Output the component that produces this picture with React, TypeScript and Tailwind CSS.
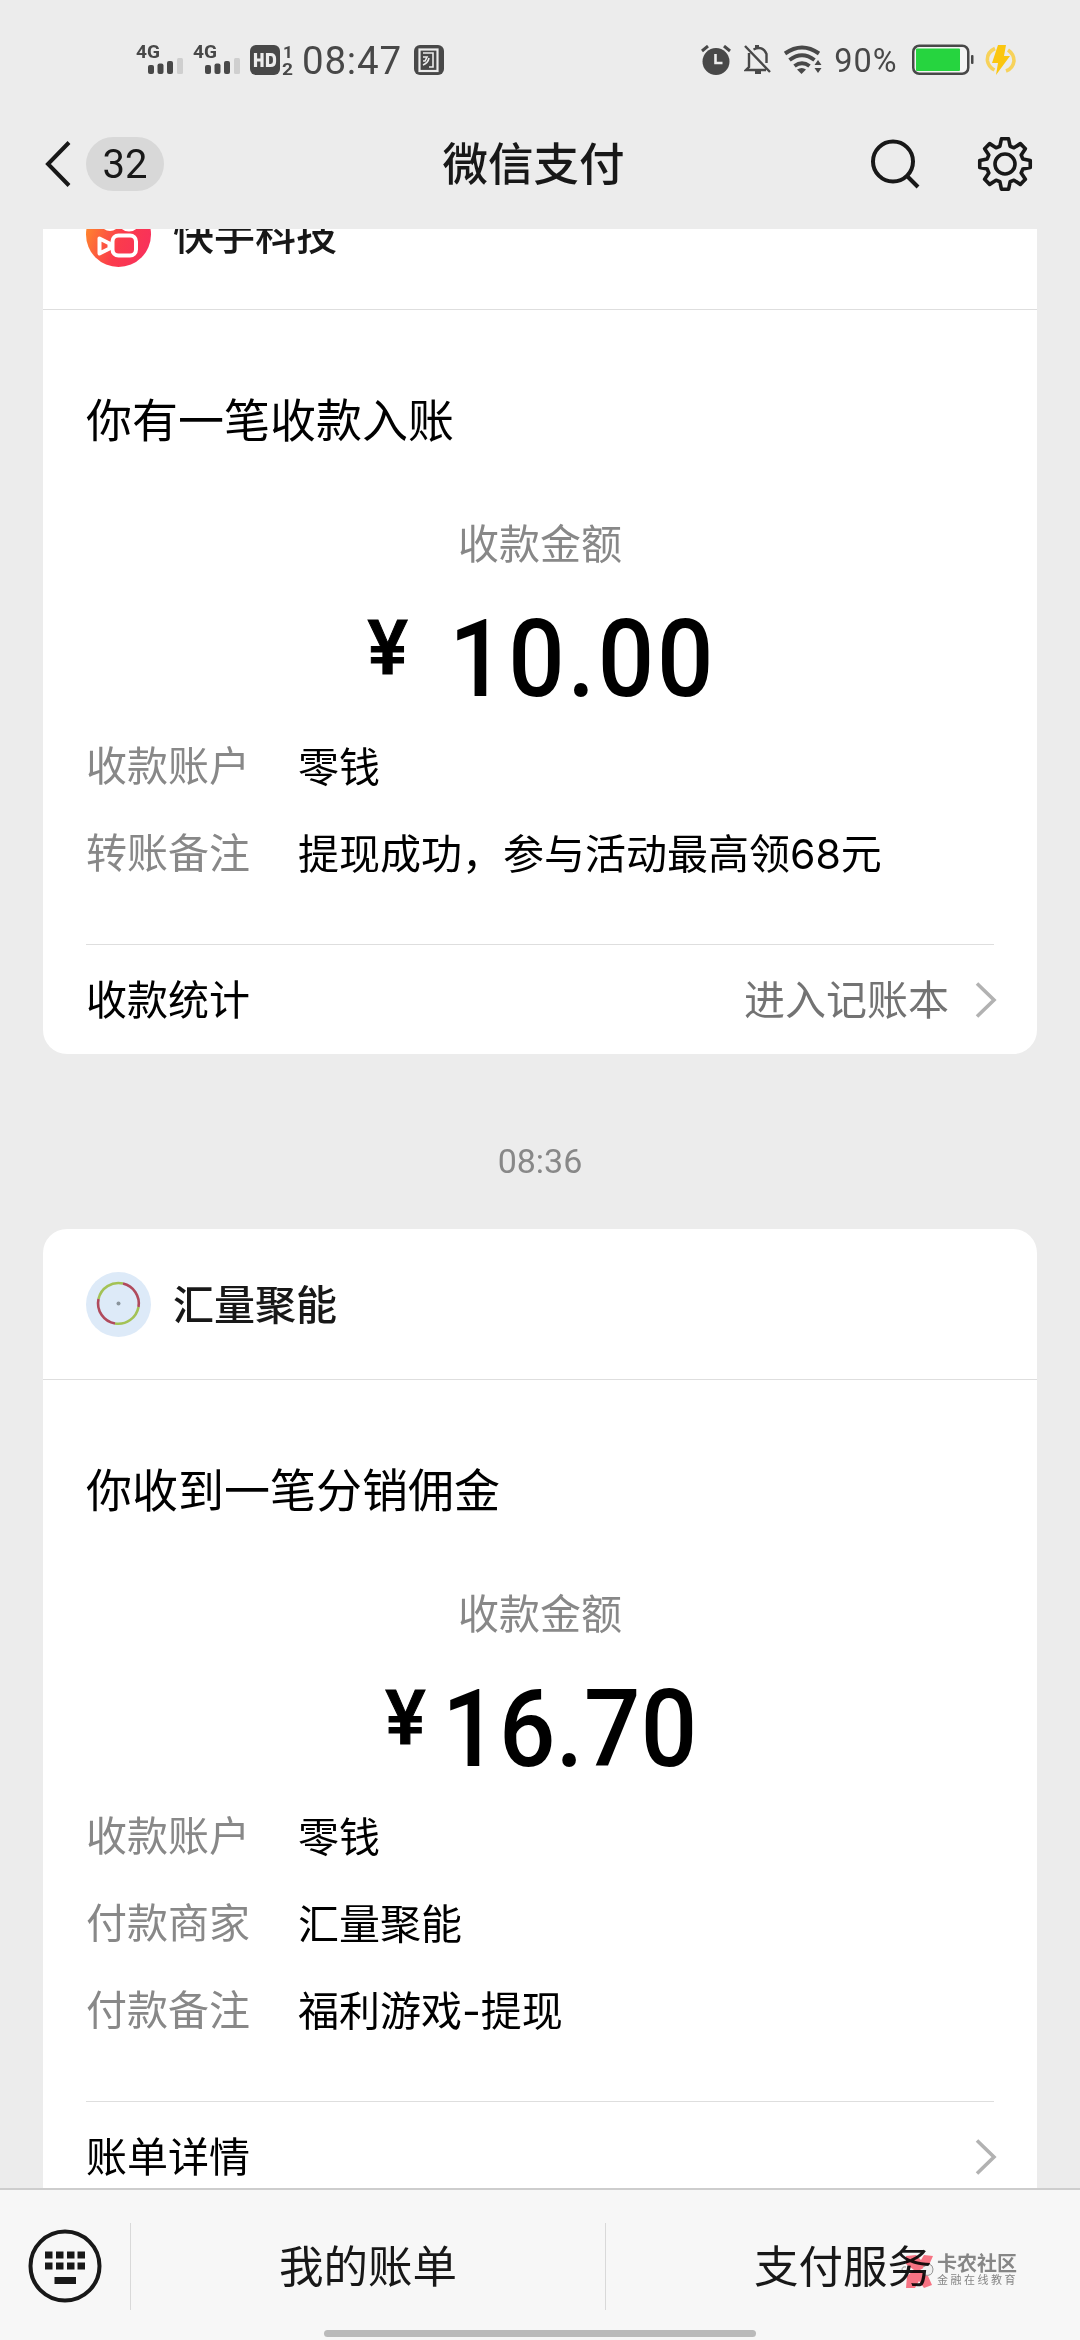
import React from "react";

const SANS = "font-['Roboto','Noto_Sans_CJK_SC',sans-serif]";

function Signal() {
  return (
    <svg width="48" height="34" viewBox="0 0 48 34" className="shrink-0 overflow-visible">
      <text x="0" y="15" fontSize="19" fontWeight="700" fill="#484848" fontFamily="Roboto, sans-serif" textLength="24" lengthAdjust="spacingAndGlyphs">4G</text>
      <rect x="12" y="22" width="6" height="9" rx="2" fill="#484848" />
      <rect x="21.500" y="20.500" width="6" height="10.500" rx="2" fill="#484848" />
      <rect x="31" y="18" width="6" height="13" rx="2" fill="#484848" />
      <rect x="41" y="15" width="6" height="16" rx="1.500" fill="#cfcfcf" />
    </svg>
  );
}

function StatusBar() {
  return (
    <div className="flex h-[120px] items-center pl-[136px] pr-[64px] text-[#484848]">
      <div className="flex h-[34px] w-[166px] items-center">
        <div className="w-[57px]"><Signal /></div>
        <div className="w-[57px]"><Signal /></div>
        <svg width="44" height="34" viewBox="0 0 44 34" className="shrink-0 overflow-visible">
          <rect x="0" y="2" width="30" height="30" rx="6" fill="#484848" />
          <path d="M5.500 10v14M12 10v14M5.500 17h6.500M17.500 11.500v11h3q4 0 4-4v-3q0-4-4-4z" fill="none" stroke="#ececec" strokeWidth="3.200" />
          <text x="33" y="14.500" fontSize="17" fontWeight="700" fill="#484848" fontFamily="Roboto, sans-serif">1</text>
          <text x="32" y="31.500" fontSize="17" fontWeight="700" fill="#484848" fontFamily="Roboto, sans-serif" textLength="11" lengthAdjust="spacingAndGlyphs">2</text>
        </svg>
      </div>
      <div className="w-[112px] whitespace-nowrap pt-[2px] text-[38.500px] leading-[40px] tracking-[0.8px]">08:47</div>
      <svg width="30" height="30" viewBox="0 0 30 30" className="shrink-0">
        <rect width="30" height="30" rx="6" fill="#484848" />
        <rect x="5.500" y="4.500" width="18" height="21.500" fill="none" stroke="#ececec" strokeWidth="2.200" />
        <path d="M9 8h10v14h-4M9 12h4l-2 4h-2M9 20q5-2 6-7" fill="none" stroke="#ececec" strokeWidth="1.600" />
      </svg>
      <div className="ml-auto flex items-center">
        <svg width="30" height="30" viewBox="0 0 30 30" className="shrink-0">
          <circle cx="15" cy="16.500" r="13.500" fill="#484848" />
          <path d="M1 6l6-5M29 6l-6-5" stroke="#484848" strokeWidth="3" />
          <path d="M14.500 9v9h7" fill="none" stroke="#ececec" strokeWidth="2.600" />
        </svg>
        <svg width="28" height="30" viewBox="0 0 28 30" className="ml-[13px] shrink-0" fill="none" stroke="#484848" strokeWidth="2.400">
          <path d="M1 1l25 26M5 8v14l-3 3h20M9.500 4.500q9-4.500 13 4.500v9" />
          <path d="M11 1.500h4M11 27.500h6" strokeWidth="3" />
        </svg>
        <svg width="40" height="30" viewBox="0 0 40 30" className="ml-[11px] shrink-0">
          <g fill="none" stroke="#484848" strokeWidth="4">
            <path d="M2 8.500q17-12 34 0" />
            <path d="M6.500 15q12.500-9.500 25 0" />
            <path d="M11.500 21q7.500-5.500 15 0" />
          </g>
          <path d="M14 24.500q5-3 9 0l-4.500 4.500z" fill="#484848" />
          <path d="M31.500 20l3.500-5 3.500 5zM31.500 23l3.500 5 3.500-5z" fill="#484848" />
        </svg>
        <div className="ml-[9px] w-[68px] whitespace-nowrap pt-[2px] text-center text-[32.500px] leading-[40px] tracking-[1px]">90%</div>
        <svg width="62" height="32" viewBox="0 0 62 32" className="ml-[12px] shrink-0">
          <rect x="1.250" y="1.750" width="55" height="28" rx="6" fill="#f4f4f4" stroke="#484848" strokeWidth="2.500" />
          <rect x="4" y="4.500" width="44" height="22.500" rx="1" fill="#26d43f" />
          <rect x="59" y="11" width="2.500" height="9" rx="1" fill="#484848" />
        </svg>
        <svg width="31" height="32" viewBox="0 0 31 32" className="ml-[11px] shrink-0">
          <path d="M10 4.500q-8.500 4-7.500 12.500q1 6 7 9M23 6q6 4 6 11q-1 7.500-8 10" fill="none" stroke="#f7d25a" strokeWidth="3.600" />
          <path d="M13 1l8 0-2 11h6L11 31l2-12H7z" fill="#fbc60f" />
        </svg>
      </div>
    </div>
  );
}

function gearPath() {
  const pts: string[] = [];
  for (let i = 0; i < 8; i++) {
    const base = (i * Math.PI) / 4 - Math.PI / 2;
    const add = (r: number, off: number) =>
      pts.push(`${(28 + r * Math.cos(base + off)).toFixed(2)} ${(28 + r * Math.sin(base + off)).toFixed(2)}`);
    add(18.5, -0.28);
    add(25.5, -0.14);
    add(25.5, 0.14);
    add(18.5, 0.28);
  }
  return "M" + pts.join("L") + "Z";
}

function NavBar() {
  return (
    <div className="flex h-[88px] items-center pl-[44px] pr-[47px] text-[#181818]">
      <svg width="28" height="50" viewBox="0 0 28 50" fill="none" stroke="#181818" strokeWidth="4" className="shrink-0">
        <path d="M25 3.500L4 25l21 21.500" />
      </svg>
      <div className="ml-[14px] flex h-[54px] w-[78px] items-center justify-center rounded-full bg-[#d8d8d8] pt-[2px] text-[40px] leading-none">32</div>
      <div className="flex-1 pl-[34px] pt-[4px] text-center text-[45.500px] font-medium leading-[54px]">微信支付</div>
      <svg width="52" height="52" viewBox="0 0 52 52" fill="none" stroke="#181818" strokeWidth="4" className="shrink-0">
        <circle cx="24" cy="23.500" r="20" />
        <path d="M38 38l11 11" />
      </svg>
      <svg width="56" height="56" viewBox="0 0 56 56" fill="none" stroke="#181818" strokeWidth="3.600" strokeLinejoin="round" className="ml-[56px] shrink-0">
        <path d={gearPath()} />
        <circle cx="28" cy="28" r="10" />
      </svg>
    </div>
  );
}

function KuaishouLogo() {
  return (
    <svg width="65" height="65" viewBox="0 0 65 65" className="shrink-0">
      <defs>
        <linearGradient id="ks" x1="0" y1="0.300" x2="1" y2="0.700">
          <stop offset="0" stopColor="#ff8a2b" />
          <stop offset="0.550" stopColor="#fb3b4c" />
          <stop offset="1" stopColor="#f8305c" />
        </linearGradient>
      </defs>
      <circle cx="32.500" cy="32.500" r="32.500" fill="url(#ks)" />
      <g fill="none" stroke="#fff" strokeWidth="4">
        <circle cx="24" cy="19" r="8" />
        <circle cx="43" cy="18" r="9.500" />
        <rect x="26.500" y="33.500" width="23.500" height="20" rx="6" />
        <path d="M13.500 36.500v15l10-5v-5z" strokeLinejoin="round" />
      </g>
    </svg>
  );
}

function RingLogo() {
  return (
    <svg width="65" height="65" viewBox="0 0 65 65" className="shrink-0">
      <circle cx="32.500" cy="32.500" r="32.500" fill="#ddeaf8" />
      <g fill="none" strokeWidth="2.600">
        <path d="M12.500 27A20.500 20.500 0 0 1 37 11.500" stroke="#a3c255" />
        <path d="M37 11.500A20.500 20.500 0 0 1 52.500 35" stroke="#b04a5c" />
        <path d="M52.500 35A20.500 20.500 0 0 1 29 51.500" stroke="#a3c255" />
        <path d="M29 51.500A20.500 20.500 0 0 1 12.500 27" stroke="#b04a5c" />
      </g>
      <circle cx="32.500" cy="31.500" r="2" fill="#8a949c" />
    </svg>
  );
}

function Chevron() {
  return (
    <svg width="22" height="38" viewBox="0 0 22 38" fill="none" stroke="#b2b2b2" strokeWidth="3.600" className="-mr-[3px] shrink-0">
      <path d="M2 2.500L19 19 2 35.500" />
    </svg>
  );
}

interface CardProps {
  logo: React.ReactNode;
  name: string;
  title: string;
  amount: string;
  amountSpacing: string;
  rows: [string, string][];
  footer: string;
  footerLink?: string;
}

const AMOUNT_LABEL = "收款金额";

function PayCard({ logo, name, title, amount, amountSpacing, rows, footer, footerLink }: CardProps) {
  return (
    <section className="mx-[43px] shrink-0 rounded-[24px] bg-white text-black">
      <header className="flex h-[151px] items-center border-b border-[#dedede] pl-[43px]">
        {logo}
        <span className="ml-[22px] pt-[3px] text-[41px] font-medium leading-[48px] text-[#181818]">{name}</span>
      </header>
      <div className="px-[43px]">
        <h2 className="pt-[83px] text-[46px] leading-[56px]">{title}</h2>
        <p className="mt-[72px] text-center text-[41px] leading-[48px] text-[#888]">{AMOUNT_LABEL}</p>
        <div className="mt-[34px] flex h-[110px] items-start justify-center font-medium">
          <span className="text-[76px] leading-[90px] [-webkit-text-stroke:1px_black]">¥</span>
          <span className={`origin-left scale-x-[0.92] text-[108px] leading-[112px] ${amountSpacing}`}>{amount}</span>
        </div>
        <dl className="mt-[10px]">
          {rows.map(([k, v]) => (
            <div key={k} className="flex h-[87px] items-center text-[41px] leading-[48px]">
              <dt className="w-[212px] text-[#888]">{k}</dt>
              <dd className="font-['Inter','Noto_Sans_CJK_SC',sans-serif]">{v}</dd>
            </div>
          ))}
        </dl>
        <div className="mt-[47px] flex h-[110px] items-center border-t border-[#dedede] text-[41px] leading-[48px]">
          <span className="flex-1 pt-[3px]">{footer}</span>
          {footerLink && <span className="mr-[26px] pt-[3px] text-[#737373]">{footerLink}</span>}
          <Chevron />
        </div>
      </div>
    </section>
  );
}

function Watermark() {
  return (
    <div className="absolute left-[901px] top-[62px] flex items-center mix-blend-multiply">
      <svg width="33" height="38" viewBox="0 0 33 38" className="shrink-0">
        <path d="M5 4l10-1 5 5 3-5 9 1-4 9-9 5 8 6 4 9-8 3-5-7-4 7H5l1-12 7-6-8-6z" fill="#ff5f72" opacity="0.85" />
        <path d="M22 15q9-6 10 2 0 8-9 6M1 18q0-4 4-3M1 18q2 4 6 2" fill="#f7f7f7" stroke="#9a9a9a" strokeWidth="1" />
      </svg>
      <div className="ml-[3px] text-[#8a8a8a]">
        <div className="text-[20px] font-bold leading-[20px]">卡农社区</div>
        <div className="text-[11px] leading-[14px] tracking-[2.500px]">金融在线教育</div>
      </div>
    </div>
  );
}

function BottomBar() {
  return (
    <footer className="relative flex h-[152px] shrink-0 flex-col border-t-2 border-[#cdcdcd] bg-[#f7f7f7] text-[#181818]">
      <div className="flex flex-1 items-center pt-[12px] text-[44.500px] leading-[54px]">
        <div className="flex w-[130px] justify-center">
          <svg width="74" height="74" viewBox="0 0 74 74" fill="#181818">
            <circle cx="37" cy="37" r="34.500" fill="none" stroke="#181818" strokeWidth="4" />
            {[17, 28, 39, 49.5].map((x) => (
              <React.Fragment key={x}>
                <rect x={x} y="22.500" width="7.500" height="7" />
                <rect x={x} y="33.500" width="7.500" height="7" />
              </React.Fragment>
            ))}
            <rect x="26.500" y="48" width="21.500" height="7" />
          </svg>
        </div>
        <div className="h-[87px] w-px bg-[#d9d9d9]" />
        <div className="flex-1 pt-[4px] text-center">我的账单</div>
        <div className="h-[87px] w-px bg-[#d9d9d9]" />
        <div className="flex-1 pt-[4px] text-center">支付服务</div>
      </div>
      <div className="mb-[3px] h-[7px] w-[432px] self-center rounded-full bg-[#bababa]" />
      <Watermark />
    </footer>
  );
}

export default function App() {
  return (
    <div className={`flex h-[2340px] w-[1080px] flex-col overflow-hidden bg-[#ececec] ${SANS}`}>
      <div className="h-[229px] shrink-0">
        <StatusBar />
        <NavBar />
      </div>
      <main className="flex min-h-0 flex-1 flex-col overflow-hidden">
        <div className="-mt-[70px] flex shrink-0 flex-col">
          <PayCard
            logo={<KuaishouLogo />}
            name="快手科技"
            title="你有一笔收款入账"
            amount="10.00"
            amountSpacing="ml-[41px] -mr-[27px] tracking-[3px]"
            rows={[
              ["收款账户", "零钱"],
              ["转账备注", "提现成功，参与活动最高领68元"],
            ]}
            footer="收款统计"
            footerLink="进入记账本"
          />
          <div className="flex h-[175px] items-center justify-center pt-[39px] text-[34px] leading-none text-[#888]">08:36</div>
          <PayCard
            logo={<RingLogo />}
            name="汇量聚能"
            title="你收到一笔分销佣金"
            amount="16.70"
            amountSpacing="ml-[16px] -mr-[25px] tracking-[0.5px]"
            rows={[
              ["收款账户", "零钱"],
              ["付款商家", "汇量聚能"],
              ["付款备注", "福利游戏-提现"],
            ]}
            footer="账单详情"
          />
        </div>
      </main>
      <BottomBar />
    </div>
  );
}
